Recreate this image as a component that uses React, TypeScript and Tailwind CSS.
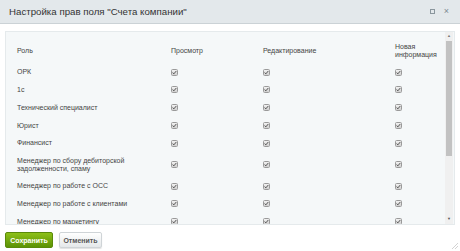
const roles = [
  ["ОРК"],
  ["1с"],
  ["Технический специалист"],
  ["Юрист"],
  ["Финансист"],
  ["Менеджер по сбору дебиторской", "задолженности, спаму"],
  ["Менеджер по работе с ОСС"],
  ["Менеджер по работе с клиентами"],
  ["Менеджер по маркетингу"],
];

function Check() {
  return (
    <span className="flex items-center justify-center w-[7px] h-[7px] rounded-[1.5px] border border-[#9a9a9a] bg-gradient-to-b from-[#f2f2f2] to-[#cfcfcf]">
      <svg width="5" height="5" viewBox="0 0 5 5">
        <path d="M0.6 2.6 L1.9 3.8 L4.4 0.9" fill="none" stroke="#444" strokeWidth="0.9" />
      </svg>
    </span>
  );
}

export default function App() {
  return (
    <div className="w-[460px] h-[251px] bg-white flex flex-col overflow-hidden relative" style={{ fontFamily: '"Liberation Sans", Arial, sans-serif' }}>
      <div className="h-[24px] bg-[#e3e8eb] border-b border-[#cbd2d6] flex items-center justify-between pl-[9px] pr-[11px] shrink-0">
        <span className="text-[9.7px] text-[#333] leading-none">Настройка прав поля "Счета компании"</span>
        <div className="flex items-center gap-[9px] text-[#7d8a92]">
          <span className="w-[5px] h-[5px] border border-[#8a969d]" />
          <span className="text-[9px] leading-none">×</span>
        </div>
      </div>

      <div className="px-[5px] pt-[7px]">
        <div className="h-[194px] border border-[#e5eaec] bg-[#f5f8f9] flex">
          <div className="flex-1 overflow-hidden pt-[6px] pl-[11px] text-[7px] text-[#444]">
            <div className="grid grid-cols-[154px_92px_132px_1fr] items-center py-[5px] leading-[7.7px]">
              <span>Роль</span>
              <span>Просмотр</span>
              <span>Редактирование</span>
              <span>
                Новая
                <br />
                информация
              </span>
            </div>
            {roles.map((r) => (
              <div key={r[0]} className="grid grid-cols-[154px_92px_132px_1fr] items-center py-[5px] leading-[7.7px]">
                <span>
                  {r.map((l, i) => (
                    <span key={i} className="block">
                      {l}
                    </span>
                  ))}
                </span>
                <Check />
                <Check />
                <Check />
              </div>
            ))}
          </div>
          <div className="w-[8px] bg-[#f0f0f0] flex flex-col items-center mr-[1px]">
            <span className="text-[4px] leading-none text-[#777] mt-[2px]">▲</span>
            <div className="w-[6px] h-[115px] bg-[#c2c2c2] mt-[3px]" />
            <div className="flex-1" />
            <span className="text-[4px] leading-none text-[#555] mb-[3px]">▼</span>
          </div>
        </div>
      </div>

      <div className="flex items-center gap-[6px] px-[5px] pt-[7px]">
        <button className="h-[16px] w-[48px] rounded-[2px] bg-gradient-to-b from-[#8dc018] to-[#5c9205] border border-[#5a8a0a] text-white text-[7px] font-bold leading-none">
          Сохранить
        </button>
        <button className="h-[16px] w-[43px] rounded-[2px] bg-gradient-to-b from-[#ffffff] to-[#e5e8ea] border border-[#cfd4d7] text-[#555] text-[7px] font-bold leading-none shadow-[0_1px_1px_rgba(0,0,0,0.12)]">
          Отменить
        </button>
      </div>

      <svg className="absolute right-[2px] bottom-[2px]" width="7" height="7" viewBox="0 0 7 7">
        <path d="M1 7 L7 1 M4 7 L7 4" stroke="#c8c8c8" strokeWidth="0.8" />
      </svg>
    </div>
  );
}
